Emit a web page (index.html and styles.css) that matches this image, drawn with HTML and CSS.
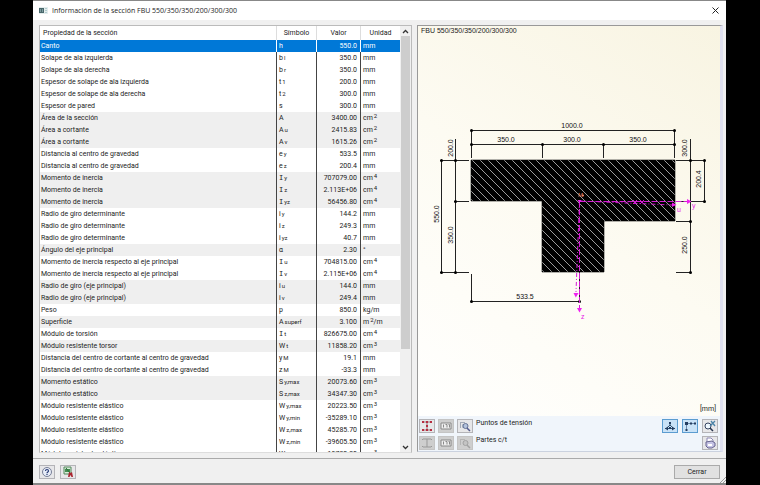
FILE: index.html
```
<!DOCTYPE html>
<html lang="es">
<head>
<meta charset="utf-8">
<title>Información de la sección</title>
<link rel="stylesheet" href="styles.css">
</head>
<body>
<div class="window">
  <header class="titlebar">
    <svg class="app-icon" width="9" height="7" viewBox="0 0 9 7" aria-hidden="true"><path d="M0 0h9v7H0z" fill="#e4eded"/><path d="M0 1h5v5H0z" fill="#49676b"/><path d="M1 2h1v3H1zM3 2h1v3H3z" fill="#7d9da0"/><path d="M6 1h2v1H6zM6 3h2v1H6zM6 5h2v1H6z" fill="#b3cdd0"/></svg>
    <h1>Información de la sección FBU 550/350/350/200/300/300</h1>
    <button class="close" type="button" aria-label="Cerrar ventana"><svg width="7" height="7" viewBox="0 0 7 7"><path d="M.5.5l6 6M6.5.5l-6 6" stroke="#222" fill="none"/></svg></button>
  </header>
  <main>
    <section class="properties">
      <div class="table-clip">
        <table>
          <colgroup><col><col class="c-sym"><col class="c-val"><col class="c-unit"></colgroup>
          <thead><tr><th>Propiedad de la sección</th><th>Símbolo</th><th>Valor</th><th>Unidad</th></tr></thead>
          <tbody>
            <tr class="selected"><td>Canto</td><td>h</td><td>550.0</td><td>mm</td></tr>
            <tr><td>Solape de ala izquierda</td><td>b<sub>l</sub></td><td>350.0</td><td>mm</td></tr>
            <tr><td>Solape de ala derecha</td><td>b<sub>r</sub></td><td>350.0</td><td>mm</td></tr>
            <tr><td>Espesor de solape de ala izquierda</td><td>t<sub>1</sub></td><td>200.0</td><td>mm</td></tr>
            <tr><td>Espesor de solape de ala derecha</td><td>t<sub>2</sub></td><td>300.0</td><td>mm</td></tr>
            <tr><td>Espesor de pared</td><td>s</td><td>300.0</td><td>mm</td></tr>
            <tr class="shade"><td>Área de la sección</td><td>A</td><td>3400.00</td><td>cm<sup>2</sup></td></tr>
            <tr class="shade"><td>Área a cortante</td><td>A<sub>u</sub></td><td>2415.83</td><td>cm<sup>2</sup></td></tr>
            <tr class="shade"><td>Área a cortante</td><td>A<sub>v</sub></td><td>1615.26</td><td>cm<sup>2</sup></td></tr>
            <tr><td>Distancia al centro de gravedad</td><td>e<sub>y</sub></td><td>533.5</td><td>mm</td></tr>
            <tr><td>Distancia al centro de gravedad</td><td>e<sub>z</sub></td><td>200.4</td><td>mm</td></tr>
            <tr class="shade"><td>Momento de inercia</td><td class="serif-i">I<sub>y</sub></td><td>707079.00</td><td>cm<sup>4</sup></td></tr>
            <tr class="shade"><td>Momento de inercia</td><td class="serif-i">I<sub>z</sub></td><td>2.113E+06</td><td>cm<sup>4</sup></td></tr>
            <tr class="shade"><td>Momento de inercia</td><td class="serif-i">I<sub>yz</sub></td><td>56456.80</td><td>cm<sup>4</sup></td></tr>
            <tr><td>Radio de giro determinante</td><td>i<sub>y</sub></td><td>144.2</td><td>mm</td></tr>
            <tr><td>Radio de giro determinante</td><td>i<sub>z</sub></td><td>249.3</td><td>mm</td></tr>
            <tr><td>Radio de giro determinante</td><td>i<sub>yz</sub></td><td>40.7</td><td>mm</td></tr>
            <tr class="shade"><td>Ángulo del eje principal</td><td>α</td><td>2.30</td><td>°</td></tr>
            <tr><td>Momento de inercia respecto al eje principal</td><td class="serif-i">I<sub>u</sub></td><td>704815.00</td><td>cm<sup>4</sup></td></tr>
            <tr><td>Momento de inercia respecto al eje principal</td><td class="serif-i">I<sub>v</sub></td><td>2.115E+06</td><td>cm<sup>4</sup></td></tr>
            <tr class="shade"><td>Radio de giro (eje principal)</td><td>i<sub>u</sub></td><td>144.0</td><td>mm</td></tr>
            <tr class="shade"><td>Radio de giro (eje principal)</td><td>i<sub>v</sub></td><td>249.4</td><td>mm</td></tr>
            <tr><td>Peso</td><td>p</td><td>850.0</td><td>kg/m</td></tr>
            <tr class="shade"><td>Superficie</td><td>A<sub>superf</sub></td><td>3.100</td><td>m<sup>2</sup>/m</td></tr>
            <tr><td>Módulo de torsión</td><td class="serif-i">I<sub>t</sub></td><td>826675.00</td><td>cm<sup>4</sup></td></tr>
            <tr class="shade"><td>Módulo resistente torsor</td><td>W<sub>t</sub></td><td>11858.20</td><td>cm<sup>3</sup></td></tr>
            <tr><td>Distancia del centro de cortante al centro de gravedad</td><td>y<sub>M</sub></td><td>19.1</td><td>mm</td></tr>
            <tr><td>Distancia del centro de cortante al centro de gravedad</td><td>z<sub>M</sub></td><td>-33.3</td><td>mm</td></tr>
            <tr class="shade"><td>Momento estático</td><td>S<sub>y,max</sub></td><td>20073.60</td><td>cm<sup>3</sup></td></tr>
            <tr class="shade"><td>Momento estático</td><td>S<sub>z,max</sub></td><td>34347.30</td><td>cm<sup>3</sup></td></tr>
            <tr><td>Módulo resistente elástico</td><td>W<sub>y,max</sub></td><td>20223.50</td><td>cm<sup>3</sup></td></tr>
            <tr><td>Módulo resistente elástico</td><td>W<sub>y,min</sub></td><td>-35289.10</td><td>cm<sup>3</sup></td></tr>
            <tr><td>Módulo resistente elástico</td><td>W<sub>z,max</sub></td><td>45285.70</td><td>cm<sup>3</sup></td></tr>
            <tr><td>Módulo resistente elástico</td><td>W<sub>z,min</sub></td><td>-39605.50</td><td>cm<sup>3</sup></td></tr>
            <tr><td>Módulo resistente elástico</td><td>W<sub>u,max</sub></td><td>19750.20</td><td>cm<sup>3</sup></td></tr>
          </tbody>
        </table>
      </div>
      <div class="scrollbar" aria-hidden="true">
        <svg width="7" height="5" viewBox="0 0 7 5"><path d="M1 4l2.500-2.500L6 4" fill="none" stroke="#333" stroke-width="1.300"/></svg>
        <div class="track"><div class="thumb"></div></div>
        <svg width="7" height="5" viewBox="0 0 7 5"><path d="M1 1l2.500 2.500L6 1" fill="none" stroke="#333" stroke-width="1.300"/></svg>
      </div>
    </section>
    <section class="preview">
      <div class="canvas">
        <p class="name">FBU 550/350/350/200/300/300</p>
        <svg class="drawing" viewBox="418 36 302 366" role="img" aria-label="Sección en T con cotas">
          <defs>
            <pattern id="hatch" width="8" height="8" patternUnits="userSpaceOnUse"><path d="M-1-1l10 10M-1 7l2 2M7-1l2 2" stroke="#c4c4c4" stroke-width=".8"/></pattern>
          </defs>
          <path d="M471 160H675V221H604V272H542V201H471z" fill="#000"/>
          <path d="M471 160H675V221H604V272H542V201H471z" fill="url(#hatch)" stroke="#000" stroke-width=".6"/>
          <g class="dim-lines">
            <path d="M471 130.500H674.500M471 144.500H674.500M471.500 130V158M542.500 144V158M603.500 144V158M674.500 130V158"/>
            <path d="M441.500 160V272M455.500 139V272M440 160.500H469M454 201.500H469M440 272.500H469"/>
            <path d="M471.500 274V302M471 301.500H579.500M579.500 272V302"/>
            <path d="M690.500 139V272M704.500 160V201M676 160.500H704M676 201.500H704M676 221.500H690M676 272.500H690"/>
          </g>
          <g class="dots">
            <circle cx="471.500" cy="130.500" r="1.500"/><circle cx="674.500" cy="130.500" r="1.500"/>
            <circle cx="471.500" cy="144.500" r="1.500"/><circle cx="542.500" cy="144.500" r="1.500"/><circle cx="603.500" cy="144.500" r="1.500"/><circle cx="674.500" cy="144.500" r="1.500"/>
            <circle cx="441.500" cy="160.500" r="1.500"/><circle cx="455.500" cy="160.500" r="1.500"/><circle cx="455.500" cy="201.500" r="1.500"/><circle cx="441.500" cy="272.500" r="1.500"/><circle cx="455.500" cy="272.500" r="1.500"/>
            <circle cx="471.500" cy="301.500" r="1.500"/><circle cx="579.500" cy="301.500" r="1.500"/>
            <circle cx="690.500" cy="160.500" r="1.500"/><circle cx="704.500" cy="160.500" r="1.500"/><circle cx="704.500" cy="201.500" r="1.500"/><circle cx="690.500" cy="221.500" r="1.500"/><circle cx="690.500" cy="272.500" r="1.500"/>
          </g>
          <g class="dim-text">
            <text x="572" y="128">1000.0</text><text x="506" y="142">350.0</text><text x="572" y="142">300.0</text><text x="638" y="142">350.0</text><text x="525" y="299">533.5</text>
            <text transform="translate(453 148) rotate(-90)">200.0</text>
            <text transform="translate(439 214) rotate(-90)">550.0</text>
            <text transform="translate(453 235) rotate(-90)">350.0</text>
            <text transform="translate(687 148) rotate(-90)">300.0</text>
            <text transform="translate(701 179) rotate(-90)">200.4</text>
            <text transform="translate(687 245) rotate(-90)">250.0</text>
          </g>
          <g class="axes">
            <path d="M579.500 201.500H687M579.500 201V309" stroke-dasharray="6 2"/>
            <path d="M579.500 201L672 205M579.500 201L576 292" stroke-dasharray="4 2 1 2"/>
            <path class="solid" d="M687 199l4.500 2.500-4.500 2.500zM672 202.500l4.500 2.300-4.500 2.300zM577 308h5l-2.500 4.500zM573.500 293h5l-2.700 4.500zM577.500 200h4l-2 3z"/>
            <path d="M633 200l4 4M637 200l-4 4M640 200l4 4M644 200l-4 4"/>
          </g>
          <g class="axis-text"><text x="692" y="208">y</text><text x="677" y="212">u</text><text x="581" y="319">z</text></g>
          <text class="shear" x="578" y="197">M</text><circle cx="583" cy="195.500" r="1" fill="#ef8f71"/>
        </svg>
        <p class="units">[mm]</p>
      </div>
      <div class="tools">
        <div class="tool-row">
          <button type="button" aria-label="Mostrar puntos de tensión"><svg viewBox="0 0 14 12"><path d="M3 2h8M3 10h8M7 2v8" stroke="#9d7077"/><path d="M2 1h2v2H2zM6 1h2v2H6zM10 1h2v2h-2zM2 9h2v2H2zM6 9h2v2H6zM10 9h2v2h-2zM6 5h2v2H6z" fill="#b62c40"/></svg></button>
          <button type="button" class="off" disabled aria-label="Numerar puntos"><svg viewBox="0 0 14 12"><path d="M2 3h10v6H2z" fill="#eee" stroke="#888"/><path d="M4.500 4.500v3M6.500 4.500h1.500v3M9.500 4.500h1v3" stroke="#888" fill="none"/></svg></button>
          <button type="button" aria-label="Detalles de puntos"><svg viewBox="0 0 14 12"><path d="M2.500 2v6M2 2.500h5" stroke="#a5acb8" fill="none"/><path d="M4 4h3v4H4z" fill="#b9c0cc"/><circle cx="7.500" cy="6" r="2.500" fill="#b4c3dd" stroke="#647395"/><path d="M9 8l3 3" stroke="#535b8f" stroke-width="1.500"/></svg></button>
          <span>Puntos de tensión</span>
          <button type="button" class="on push" aria-label="Mostrar cotas"><svg viewBox="0 0 14 12"><path d="M2 8.500h10M7 3v2L4 8M7 5l3 3" stroke="#315271" fill="none"/><path d="M2 8.500l3-2v4zM12 8.500l-3-2v4zM6 2h2v2H6zM6 7h2v2H6z" fill="#233c60"/></svg></button>
          <button type="button" class="on" aria-label="Mostrar ejes"><svg viewBox="0 0 14 12"><path d="M3.500 10V3.500H11" stroke="#6a87a8" fill="none"/><path d="M2 2h3v3H2zM7 2.500h2v2H7zM11 2.500h2v2h-2zM2.500 9h2v2h-2z" fill="#233c60"/></svg></button>
          <button type="button" aria-label="Vista completa"><svg viewBox="0 0 14 12"><circle cx="5" cy="6" r="3" fill="#eff8ff" stroke="#354360"/><path d="M7 8l3 3" stroke="#25334c" stroke-width="1.500"/><path d="M7 6l5-5M12 6L8 1" stroke="#4b83a7" stroke-width="1.300"/></svg></button>
        </div>
        <div class="tool-row">
          <button type="button" class="off" disabled aria-label="Mostrar partes c/t"><svg viewBox="0 0 14 12"><path d="M3 2h8M3 10h8M7 2v8M2 3l1-1M11 2l1 1M2 9l1 1M11 10l1-1" stroke="#999" fill="none"/></svg></button>
          <button type="button" class="off" disabled aria-label="Numerar partes"><svg viewBox="0 0 14 12"><path d="M2 3h10v6H2z" fill="#eee" stroke="#888"/><path d="M4.500 4.500v3M6.500 4.500h1.500v3M9.500 4.500h1v3" stroke="#888" fill="none"/></svg></button>
          <button type="button" class="off" disabled aria-label="Detalles de partes"><svg viewBox="0 0 14 12"><path d="M2.500 2v6M2 2.500h5" stroke="#b5b5b5" fill="none"/><circle cx="7.500" cy="6" r="2.500" fill="#c4c4c4" stroke="#a2a2a2"/><path d="M9 8l3 3" stroke="#a2a2a2" stroke-width="1.500"/></svg></button>
          <span>Partes c/t</span>
          <button type="button" class="push" aria-label="Imprimir"><svg viewBox="0 0 14 12"><path d="M4 5V1h4l2 2v3" fill="#fff" stroke="#8c88b5"/><path d="M3 5l6-1 3 2v3l-3 2H5L3 9z" fill="#c5c3e5" stroke="#66648e"/><path d="M5 7h4v2H5z" fill="#fff"/></svg></button>
        </div>
      </div>
    </section>
  </main>
  <footer>
    <button type="button" aria-label="Ayuda"><svg viewBox="0 0 14 12"><circle cx="7" cy="6" r="4.500" fill="#e8edf8" stroke="#777f97"/><path d="M5.500 5c0-2 3-2 3 0 0 1-1.500 1-1.500 2.200M7 8v1" fill="none" stroke="#293d77" stroke-width="1.200"/></svg></button>
    <button type="button" aria-label="Exportar"><svg viewBox="0 0 14 12"><path d="M3 1h7v7H3z" fill="#d9eedb" stroke="#52865a"/><path d="M4 3h5v3H4z" fill="#448d50"/><path d="M5 2l4 5" stroke="#296c38"/><path d="M8 6l1.500 1L11 6l1 5h-1.500l-1-2-1 2H7z" fill="#aa2530"/></svg></button>
    <button type="button" class="primary">Cerrar</button>
    <svg class="grip" width="6" height="6" viewBox="0 0 6 6" aria-hidden="true"><path d="M0 6l6-6M3 6l3-3" stroke="#999" fill="none"/></svg>
  </footer>
</div>
</body>
</html>
```
FILE: styles.css
```
* { box-sizing: border-box; }
body {
  margin: 0;
  height: 100vh;
  padding: 0 34px 0 33px;
  background: #000;
  color: #1c1c1c;
  font: 7px/12px Roboto, "Liberation Sans", sans-serif;
}
h1, p { margin: 0; font: inherit; }
.window {
  display: flex;
  flex-direction: column;
  height: 100%;
  background: #f0f0f0;
  border-top: 1px solid #888;
  border-bottom: 2px solid #888;
}
.titlebar {
  display: flex;
  align-items: center;
  gap: 4px;
  height: 19px;
  padding: 0 6px;
  background: #fff;
  font-family: "Open Sans", sans-serif;
}
.close { margin-left: auto; padding: 0; width: 9px; height: 9px; border: 0; background: none; display: grid; place-items: center; }
main {
  flex: 1;
  min-height: 0;
  display: grid;
  grid-template-columns: 373fr 306fr;
  grid-template-rows: 100%;
  gap: 5px;
  padding: 5px 3px 6px 6px;
  border-bottom: 1px solid #aaa;
}
.properties {
  display: flex;
  min-height: 0;
  margin-bottom: -1px;
  background: #fff;
  border: 1px solid #bbb;
  border-bottom-color: #ddd;
}
.table-clip { flex: 1; min-width: 0; overflow: hidden; }
table { width: 100%; table-layout: fixed; border-collapse: separate; border-spacing: 0; }
.c-sym, .c-unit { width: 40px; }
.c-val { width: 44px; }
th, td { padding: 0 3px; height: 12px; line-height: 12px; white-space: nowrap; text-align: left; font-weight: normal; }
th { height: 14px; text-align: center; border-left: 1px solid #ddd; }
th:first-child { text-align: left; border: 0; }
td { border-left: 1px solid #444; }
td:first-child { border: 0; padding-left: 1px; }
td:nth-child(2) { padding-left: 2px; }
td:nth-child(3) { text-align: right; }
td:nth-child(4) { padding-left: 2px; }
.shade { background: #efefef; }
.selected { background: #0078d7; color: #fff; }
.selected td { border-left-color: #fff; }
.serif-i { font-family: "DejaVu Sans Mono", monospace; }
sub, sup { font: 6px/6px Roboto, "Liberation Sans", sans-serif; margin-left: 1px; vertical-align: baseline; position: relative; }
sup { top: -2px; }
.scrollbar {
  display: flex;
  flex-direction: column;
  align-items: center;
  width: 11px;
  padding: 3px 1px 2px;
  gap: 2px;
  background: #f0f0f0;
}
.track { flex: 1; align-self: stretch; }
.thumb { height: 77%; background: #cdcdcd; }
.preview {
  display: flex;
  flex-direction: column;
  min-width: 0;
  border: 1px solid #999;
  border-right: 3px solid #dfe0ef;
  border-bottom: 1px solid #cbd2df;
}
.canvas {
  flex: 1;
  min-height: 0;
  display: flex;
  flex-direction: column;
  background: linear-gradient(215deg, #f8f4e2, #fdfbf2 50%, #fffffe);
}
.name { height: 10px; line-height: 10px; padding-left: 3px; font-family: "Liberation Sans", sans-serif; }
.units { line-height: 14px; text-align: right; padding-right: 4px; }
.drawing { flex: 1; min-height: 0; width: 100%; }
.dim-lines { stroke: #222; fill: none; }
.dots { fill: #000; }
.dim-text, .axis-text, .shear { font: 7px "Liberation Sans", sans-serif; }
.dim-text { text-anchor: middle; fill: #111; }
.axes { stroke: #d51bd5; fill: none; }
.axes .solid { fill: #f020f0; stroke: none; }
.axis-text { fill: #e622e6; }
.shear { fill: #ef8f71; font-size: 6px; }
.tools { background: #f0f5fb; padding: 3px 2px 1px 1px; display: grid; gap: 3px; }
.tool-row { display: flex; gap: 3px; height: 14px; }
.tool-row span { line-height: 9px; }
button { font: inherit; color: inherit; }
.tool-row button, footer button {
  width: 16px;
  height: 14px;
  padding: 0;
  border: 1px solid #b4b4b8;
  background: #e7e7e9;
}
.tool-row svg, footer button svg { display: block; width: 14px; height: 12px; }
.tool-row .off { background: #cecece; border-color: #c4c4c4; }
.tool-row .on { background: #c9e2f7; border-color: #5b9cd0; }
.tool-row .on { margin-right: 1px; }
.tool-row .push { margin-left: auto; }
footer { position: relative; display: flex; gap: 5px; padding: 6px 6px 4px; }
footer .primary { width: 46px; margin-left: auto; border-color: #aaa; background: #e1e1e1; line-height: 12px; }
.grip { position: absolute; right: 0; bottom: 0; }
```
